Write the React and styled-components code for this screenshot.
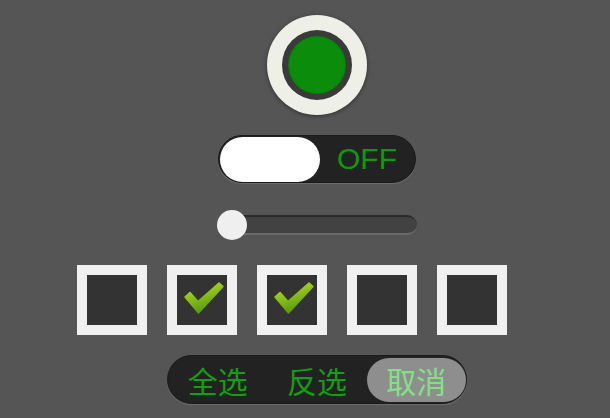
import styled, { createGlobalStyle } from 'styled-components'

const GlobalStyle = createGlobalStyle`
    html, body {
        margin: 0;
        padding: 0;
        background: #555555;
        font-family: "Liberation Sans", "Noto Sans CJK SC", sans-serif;
    }
`

const Page = styled.div`
    width: 610px;
    height: 418px;
    box-sizing: border-box;
    padding: 15px 0 0 24px;
    display: flex;
    flex-direction: column;
    align-items: center;
    overflow: hidden;
`

const Lamp = styled.div`
    width: 100px;
    height: 100px;
    border-radius: 50%;
    background: #eef0e7;
    box-shadow: 0 1px 4px rgba(0, 0, 0, 0.45);
    display: flex;
    align-items: center;
    justify-content: center;
`

const LampRing = styled.div`
    width: 70px;
    height: 70px;
    border-radius: 50%;
    background: #3a3a3a;
    display: flex;
    align-items: center;
    justify-content: center;
`

const LampLight = styled.div`
    width: 58px;
    height: 58px;
    border-radius: 50%;
    background: ${({ $on }) => ($on ? '#0b8c0b' : '#333')};
    box-shadow: inset 0 0 2px rgba(0, 0, 0, 0.3);
`

const Toggle = styled.div`
    margin-top: 20px;
    width: 198px;
    height: 48px;
    box-sizing: border-box;
    border-radius: 24px;
    background: #222222;
    border: 1px solid #1a1a1a;
    box-shadow: 0 1px 1px rgba(255, 255, 255, 0.15);
    display: flex;
    align-items: center;
    padding: 1px;
`

const Knob = styled.div`
    width: 100px;
    height: 45px;
    border-radius: 23px;
    background: #ffffff;
`

const ToggleLabel = styled.span`
    flex: 1;
    text-align: center;
    font-size: 30px;
    color: #0d9a0d;
    padding-left: 2px;
    padding-right: 2px;
`

const Slider = styled.div`
    margin-top: 27px;
    width: 200px;
    height: 30px;
    display: flex;
    align-items: center;
    position: relative;
`

const Track = styled.div`
    width: 100%;
    height: 20px;
    box-sizing: border-box;
    border-radius: 10px;
    background: #424242;
    border-top: 2px solid #2a2a2a;
    border-bottom: 2px solid #6a6a6a;
`

const Thumb = styled.div`
    position: absolute;
    left: 0;
    top: 0;
    width: 30px;
    height: 30px;
    border-radius: 50%;
    background: #efefef;
`

const BoxRow = styled.div`
    margin-top: 25px;
    margin-right: 50px;
    display: flex;
    gap: 20px;
`

const Box = styled.div`
    width: 70px;
    height: 70px;
    box-sizing: border-box;
    border: 10px solid #f0f0f0;
    background: #333333;
`

const Segments = styled.div`
    margin-top: 20px;
    width: 300px;
    height: 49px;
    box-sizing: border-box;
    border-radius: 25px;
    background: #222222;
    border: 1px solid #1a1a1a;
    box-shadow: 0 1px 1px rgba(255, 255, 255, 0.15);
    display: flex;
    align-items: center;
    padding: 2px 0;
`

const Segment = styled.div`
    width: 100px;
    height: 44px;
    border-radius: 22px;
    display: flex;
    align-items: center;
    justify-content: center;
    font-family: "Noto Sans CJK SC", sans-serif;
    font-size: 30px;
    color: ${({ $active }) => ($active ? '#85e085' : '#10a010')};
    background: ${({ $active }) => ($active ? '#8e8e8e' : 'transparent')};
`

function Check() {
    return (
        <svg width="50" height="50" viewBox="0 0 50 50">
            <defs>
                <linearGradient id="chk" x1="0" y1="0" x2="0.4" y2="1">
                    <stop offset="0" stopColor="#bde622" />
                    <stop offset="1" stopColor="#579a0e" />
                </linearGradient>
            </defs>
            <path
                d="M8 22 L13 17.5 L21 26.5 L42 8 L46 11.5 L21.5 38 Z"
                fill="url(#chk)"
                strokeLinejoin="round"
                stroke="url(#chk)"
                strokeWidth="1.5"
            />
        </svg>
    )
}

const boxes = [false, true, true, false, false]
const options = ['全选', '反选', '取消']

export default function App() {
    return (
        <>
            <GlobalStyle />
            <Page>
                <Lamp>
                    <LampRing>
                        <LampLight $on />
                    </LampRing>
                </Lamp>

                <Toggle>
                    <Knob />
                    <ToggleLabel>OFF</ToggleLabel>
                </Toggle>

                <Slider>
                    <Track />
                    <Thumb />
                </Slider>

                <BoxRow>
                    {boxes.map((checked, i) => (
                        <Box key={i}>{checked && <Check />}</Box>
                    ))}
                </BoxRow>

                <Segments>
                    {options.map((label, i) => (
                        <Segment key={label} $active={i === 2}>
                            {label}
                        </Segment>
                    ))}
                </Segments>
            </Page>
        </>
    )
}
